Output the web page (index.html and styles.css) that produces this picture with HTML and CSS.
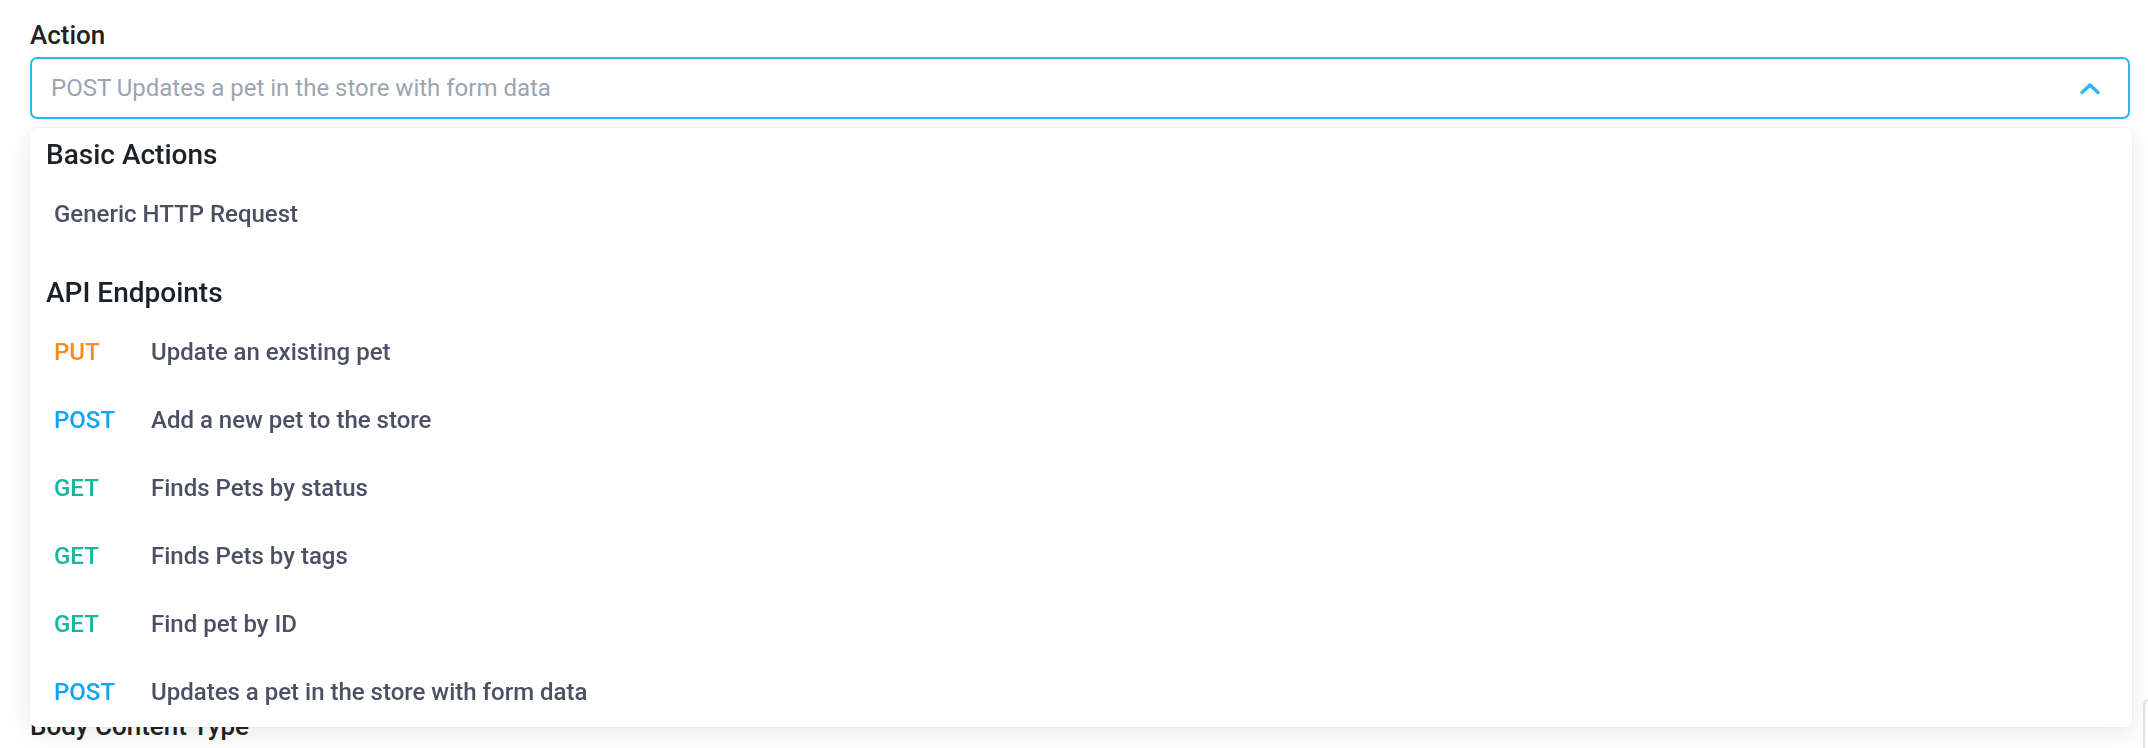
FILE: index.html
```html
<!DOCTYPE html>
<html lang="en">
<head>
    <meta charset="UTF-8">
    <meta name="viewport" content="width=device-width, initial-scale=1.0">
    <title>Action</title>
    <link rel="stylesheet" href="styles.css">
</head>
<body>
    <main class="form">
        <div class="field field-action">
            <label class="field-label">Action</label>
            <div class="select">
                <div class="select-control">
                    <span class="select-placeholder">POST Updates a pet in the store with form data</span>
                    <svg class="select-arrow" width="22" height="13" viewBox="0 0 22 13">
                        <polyline points="3,10.5 11,3 19,10.5" fill="none" stroke="#29b6f6" stroke-width="3.4" stroke-linecap="round" stroke-linejoin="round"/>
                    </svg>
                </div>
                <div class="select-menu">
                    <div class="menu-group">
                        <h3 class="menu-heading">Basic Actions</h3>
                        <ul class="menu-list">
                            <li class="menu-item">Generic HTTP Request</li>
                        </ul>
                    </div>
                    <div class="menu-group">
                        <h3 class="menu-heading">API Endpoints</h3>
                        <ul class="menu-list">
                            <li class="menu-item"><span class="method put">PUT</span>Update an existing pet</li>
                            <li class="menu-item"><span class="method post">POST</span>Add a new pet to the store</li>
                            <li class="menu-item"><span class="method get">GET</span>Finds Pets by status</li>
                            <li class="menu-item"><span class="method get">GET</span>Finds Pets by tags</li>
                            <li class="menu-item"><span class="method get">GET</span>Find pet by ID</li>
                            <li class="menu-item"><span class="method post">POST</span>Updates a pet in the store with form data</li>
                        </ul>
                    </div>
                </div>
            </div>
        </div>
        <div class="field field-body">
            <label class="field-label">Body Content Type</label>
        </div>
    </main>
    <div class="side-tab"></div>
</body>
</html>
```

FILE: styles.css
```css
body {
    margin: 0;
    font-family: Roboto, "Liberation Sans", sans-serif;
    background-color: #fff;
    overflow: hidden;
}

.form {
    padding: 20px 18px 0 30px;
}

.field-label {
    display: block;
    font-size: 26px;
    line-height: 30px;
    font-weight: 500;
    color: #222;
    margin-bottom: 7px;
}

.field-body {
    margin-top: 592px;
}

.select {
    position: relative;
}

.select-control {
    display: flex;
    align-items: center;
    justify-content: space-between;
    height: 62px;
    box-sizing: border-box;
    padding: 0 27px 0 19px;
    border: 2px solid #29b6f6;
    border-radius: 7px;
    background-color: #fff;
}

.select-placeholder {
    font-size: 24px;
    line-height: 28px;
    color: #9aa5b1;
}

.select-menu {
    position: absolute;
    top: 71px;
    left: 0;
    right: -2px;
    z-index: 10;
    padding: 12px 16px 1px;
    background-color: #fff;
    border-radius: 7px;
    box-shadow: 0 0 0 1px rgba(0, 0, 0, 0.03), 0 6px 28px rgba(0, 0, 0, 0.09);
}

.menu-group + .menu-group {
    margin-top: 30px;
}

.menu-heading {
    margin: 0 0 10px;
    font-size: 28px;
    line-height: 30px;
    font-weight: 500;
    color: #1c2127;
}

.menu-list {
    list-style: none;
    margin: 0;
    padding: 0;
}

.menu-item {
    display: flex;
    padding: 20px 8px;
    font-size: 24px;
    line-height: 28px;
    font-weight: 500;
    color: #4a5163;
}

.method {
    width: 97px;
    flex-shrink: 0;
}

.method.put {
    color: #f78c1c;
}

.method.post {
    color: #0ea5f0;
}

.method.get {
    color: #14b89c;
}

.side-tab {
    position: fixed;
    left: 2143px;
    top: 699px;
    width: 40px;
    height: 80px;
    border: 2px solid #e3e3e6;
    border-radius: 6px;
    background-color: #fff;
}
```
